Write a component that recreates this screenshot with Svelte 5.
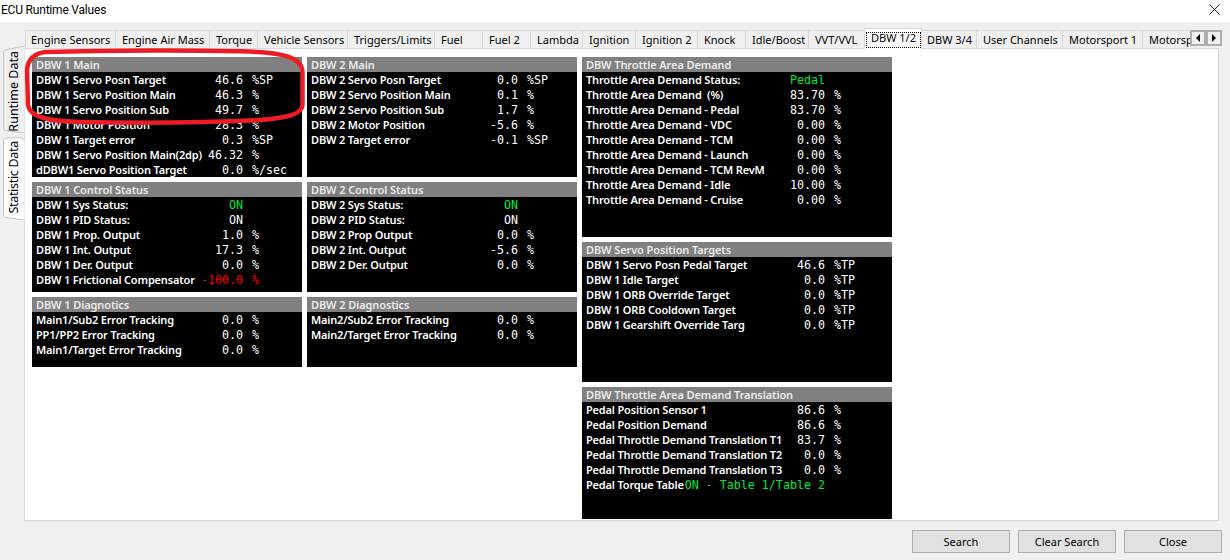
<script>
  const tabs = [
    ['Engine Sensors', 91], ['Engine Air Mass', 94], ['Torque', 48], ['Vehicle Sensors', 90],
    ['Triggers/Limits', 87], ['Fuel', 48], ['Fuel 2', 48], ['Lambda', 52], ['Ignition', 53],
    ['Ignition 2', 62], ['Knock', 48], ['Idle/Boost', 63], ['VVT/VVL', 57], ['DBW 1/2', 58, true],
    ['DBW 3/4', 56], ['User Channels', 86], ['Motorsport 1', 80], ['Motorsport 2', 80]
  ];

  // [label, value, unit, colour class]
  const col1 = [
    { title: 'DBW 1 Main', h: 120, rows: [
      ['DBW 1 Servo Posn Target', '46.6', '%SP'],
      ['DBW 1 Servo Position Main', '46.3', '%'],
      ['DBW 1 Servo Position Sub', '49.7', '%'],
      ['DBW 1 Motor Position', '28.3', '%'],
      ['DBW 1 Target error', '0.3', '%SP'],
      ['DBW 1 Servo Position Main(2dp)', '46.32', '%'],
      ['dDBW1 Servo Position Target', '0.0', '%/sec']
    ]},
    { title: 'DBW 1 Control Status', h: 110, rows: [
      ['DBW 1 Sys Status:', 'ON', '', 'green'],
      ['DBW 1 PID Status:', 'ON', ''],
      ['DBW 1 Prop. Output', '1.0', '%'],
      ['DBW 1 Int. Output', '17.3', '%'],
      ['DBW 1 Der. Output', '0.0', '%'],
      ['DBW 1 Frictional Compensator', '-100.0', '%', 'red']
    ]},
    { title: 'DBW 1 Diagnotics', h: 70, rows: [
      ['Main1/Sub2 Error Tracking', '0.0', '%'],
      ['PP1/PP2 Error Tracking', '0.0', '%'],
      ['Main1/Target Error Tracking', '0.0', '%']
    ]}
  ];

  const col2 = [
    { title: 'DBW 2 Main', h: 120, rows: [
      ['DBW 2 Servo Posn Target', '0.0', '%SP'],
      ['DBW 2 Servo Position Main', '0.1', '%'],
      ['DBW 2 Servo Position Sub', '1.7', '%'],
      ['DBW 2 Motor Position', '-5.6', '%'],
      ['DBW 2 Target error', '-0.1', '%SP']
    ]},
    { title: 'DBW 2 Control Status', h: 110, rows: [
      ['DBW 2 Sys Status:', 'ON', '', 'green'],
      ['DBW 2 PID Status:', 'ON', ''],
      ['DBW 2 Prop Output', '0.0', '%'],
      ['DBW 2 Int. Output', '-5.6', '%'],
      ['DBW 2 Der. Output', '0.0', '%']
    ]},
    { title: 'DBW 2 Diagnostics', h: 70, rows: [
      ['Main2/Sub2 Error Tracking', '0.0', '%'],
      ['Main2/Target Error Tracking', '0.0', '%']
    ]}
  ];

  const col3 = [
    { title: 'DBW Throttle Area Demand', h: 180, rows: [
      ['Throttle Area Demand Status:', 'Pedal', '', 'green'],
      ['Throttle Area Demand  (%)', '83.70', '%'],
      ['Throttle Area Demand - Pedal', '83.70', '%'],
      ['Throttle Area Demand - VDC', '0.00', '%'],
      ['Throttle Area Demand - TCM', '0.00', '%'],
      ['Throttle Area Demand - Launch', '0.00', '%'],
      ['Throttle Area Demand - TCM RevM', '0.00', '%'],
      ['Throttle Area Demand - Idle', '10.00', '%'],
      ['Throttle Area Demand - Cruise', '0.00', '%']
    ]},
    { title: 'DBW Servo Position Targets', h: 140, rows: [
      ['DBW 1 Servo Posn Pedal Target', '46.6', '%TP'],
      ['DBW 1 Idle Target', '0.0', '%TP'],
      ['DBW 1 ORB Override Target', '0.0', '%TP'],
      ['DBW 1 ORB Cooldown Target', '0.0', '%TP'],
      ['DBW 1 Gearshift Override Targ', '0.0', '%TP']
    ]},
    { title: 'DBW Throttle Area Demand Translation', h: 132, rows: [
      ['Pedal Position Sensor 1', '86.6', '%'],
      ['Pedal Position Demand', '86.6', '%'],
      ['Pedal Throttle Demand Translation T1', '83.7', '%'],
      ['Pedal Throttle Demand Translation T2', '0.0', '%'],
      ['Pedal Throttle Demand Translation T3', '0.0', '%'],
      ['Pedal Torque Table', 'ON - Table 1/Table 2', '', 'green']
    ]}
  ];

  const columns = [
    { panels: col1, cls: 'narrow' },
    { panels: col2, cls: 'narrow' },
    { panels: col3, cls: 'wide' }
  ];
</script>

<div class="window">
  <header class="titlebar">
    <span class="title">ECU Runtime Values</span>
    <svg class="close-x" width="11" height="11" viewBox="0 0 11 11">
      <path d="M0.5 0.5 L10.5 10.5 M10.5 0.5 L0.5 10.5" stroke="#222" stroke-width="1" fill="none" />
    </svg>
  </header>

  <div class="body">
    <div class="side-tabs">
      <div class="side-tab runtime">
        <svg width="22" height="88" viewBox="0 0 22 88">
          <path d="M21.5 0.5 L21.5 1 L2 5 Q0.5 5.5 0.5 7 L0.5 84 Q0.5 85 2 85.3 L21.5 88" fill="#f0f0f0" stroke="#c4c4c4" />
        </svg>
        <span>Runtime Data</span>
      </div>
      <div class="side-tab statistic">
        <svg width="22" height="83" viewBox="0 0 22 83">
          <path d="M21.5 3 Q19 0.5 16 0.5 L2 1.2 Q0.5 1.5 0.5 3 L0.5 79 Q0.5 80 2 80.3 L21.5 83" fill="#fff" stroke="#c4c4c4" />
        </svg>
        <span>Statistic Data</span>
      </div>
    </div>

    <div class="main">
      <div class="tabstrip">
        {#each tabs as t}
          <div class="tab" class:active={t[2]} style="width: {t[1]}px">
            <span class:focus={t[2]}>{t[0]}</span>
          </div>
        {/each}
        <div class="scrollers">
          <div class="scroller"><i class="arrow left"></i></div>
          <div class="scroller"><i class="arrow right"></i></div>
        </div>
      </div>

      <div class="pane">
        {#each columns as col}
          <div class="column {col.cls}">
            {#each col.panels as p}
              <section class="panel" style="height: {p.h}px">
                <h3>{p.title}</h3>
                {#each p.rows as r}
                  <div class="row">
                    <div class="pair">
                      <span class="label">{r[0]}</span>
                      <span class="value {r[3] || ''}">{r[1]}</span>
                    </div>
                    <span class="unit {r[3] || ''}">{r[2]}</span>
                  </div>
                {/each}
              </section>
            {/each}
          </div>
        {/each}

        <!-- hand-drawn marker round the first panel, viewBox is in page coordinates -->
        <svg class="oval" width="290" height="84" viewBox="24 48 290 84">
          <path d="M46 52 C110 50 200 50 250 51.5 C280 53 302 56 302.5 72 L302.5 105 C302 115 285 118 260 120 C200 123 130 123 80 122 C50 121 30 118 28 105 L27 70 C28 58 36 53 46 52 Z"
            fill="none" stroke="#ed1c24" stroke-width="4.5" />
        </svg>
      </div>
    </div>
  </div>

  <footer class="buttons">
    <button>Search</button>
    <button>Clear Search</button>
    <button>Close</button>
  </footer>
</div>

<style>
  :global(body) {
    margin: 0;
    background: #f0f0f0;
  }

  .window {
    width: 1230px;
    height: 560px;
    display: flex;
    flex-direction: column;
    overflow: hidden;
    font-family: "Noto Sans", sans-serif;
    font-size: 11px;
    color: #000;
    background: #f0f0f0;
  }

  .titlebar {
    height: 22px;
    flex: none;
    background: #fff;
    display: flex;
    justify-content: space-between;
    align-items: center;
    padding: 0 10px 3px 1px;
    box-sizing: border-box;
  }

  .title {
    font-family: Roboto, sans-serif;
    font-size: 12px;
    letter-spacing: -0.2px;
  }

  .body {
    flex: 1;
    display: flex;
    padding-left: 3px;
    min-height: 0;
  }

  .side-tabs {
    width: 22px;
    margin-right: -1px;
    flex: none;
    padding-top: 23px;
    display: flex;
    flex-direction: column;
    gap: 4px;
    position: relative;
    z-index: 1;
  }

  .side-tab {
    position: relative;
    display: flex;
    justify-content: center;
    align-items: flex-end;
    box-sizing: border-box;
  }

  .side-tab.runtime {
    height: 88px;
    padding-bottom: 1px;
  }

  .side-tab.statistic {
    height: 83px;
    padding-bottom: 6px;
  }

  .side-tab svg {
    position: absolute;
    left: 0;
    top: 0;
  }

  .side-tab span {
    position: relative;
    writing-mode: vertical-rl;
    transform: rotate(180deg);
    font-size: 12.5px;
    white-space: nowrap;
    line-height: 20px;
  }

  .side-tab.statistic span {
    letter-spacing: -0.3px;
  }

  .main {
    flex: 1;
    min-width: 0;
    display: flex;
    flex-direction: column;
    padding-top: 6px;
    padding-right: 11px;
  }

  .tabstrip {
    height: 21px;
    margin-bottom: -1px;
    flex: none;
    display: flex;
    align-items: flex-start;
    padding-left: 1px;
    position: relative;
    z-index: 1;
    overflow: hidden;
    width: 1197px;
  }

  .tab {
    flex: none;
    height: 18px;
    margin-top: 2px;
    box-sizing: border-box;
    border: 1px solid #d9d9d9;
    border-bottom: none;
    border-left: none;
    background: #f0f0f0;
    padding-left: 6px;
    line-height: 18px;
    white-space: nowrap;
    overflow: hidden;
  }

  .tab:first-child {
    border-left: 1px solid #d9d9d9;
    padding-left: 5px;
  }

  .tab.active {
    height: 21px;
    margin-top: 0;
    background: #fff;
    margin-left: -2px;
    margin-right: -1px;
    border-left: 1px solid #d9d9d9;
    padding-left: 1px;
    position: relative;
    z-index: 1;
  }

  .focus {
    display: block;
    box-sizing: border-box;
    width: 55px;
    height: 16px;
    margin-top: 3px;
    border: 1px dotted #000;
    padding-left: 4px;
    line-height: 10px;
  }

  .scrollers {
    position: absolute;
    right: 0;
    top: 2px;
    display: flex;
    z-index: 2;
  }

  .scroller {
    width: 16px;
    height: 16px;
    box-sizing: border-box;
    background: #f0f0f0;
    border: 2px solid #adadad;
    display: flex;
    align-items: center;
    justify-content: center;
  }

  .arrow {
    width: 0;
    height: 0;
    border-top: 4px solid transparent;
    border-bottom: 4px solid transparent;
  }

  .arrow.left {
    border-right: 4px solid #000;
  }

  .arrow.right {
    border-left: 4px solid #000;
  }

  .pane {
    position: relative;
    background: #fff;
    border: 1px solid #d9d9d9;
    display: flex;
    gap: 5px;
    padding: 8px 0 0 7px;
    box-sizing: border-box;
    height: 473px;
    flex: none;
  }

  .column {
    display: flex;
    flex-direction: column;
    gap: 5px;
  }

  .column.narrow {
    width: 270px;
    --pair: 211px;
  }

  .column.wide {
    width: 310px;
    --pair: 243px;
  }

  .panel {
    background: #000;
    color: #fff;
    overflow: hidden;
    font-weight: 600;
  }

  h3 {
    margin: 0;
    height: 15px;
    line-height: 15px;
    font-size: 11px;
    font-weight: 600;
    letter-spacing: -0.1px;
    background: #808080;
    color: #ececec;
    padding-left: 4px;
  }

  .row {
    display: flex;
    align-items: baseline;
    height: 15px;
    line-height: 15px;
    white-space: pre;
  }

  .pair {
    width: var(--pair);
    display: flex;
    align-items: baseline;
    justify-content: space-between;
    padding-left: 4px;
    box-sizing: border-box;
    flex: none;
  }

  .label {
    letter-spacing: -0.17px;
  }

  .value,
  .unit {
    font-family: "DejaVu Sans Mono", monospace;
    font-size: 11.67px;
    font-weight: 400;
  }

  .unit {
    margin-left: 9px;
  }

  .green {
    color: #00e83c;
  }

  .red {
    color: #f00;
  }

  .oval {
    position: absolute;
    left: -1px;
    top: -1px;
  }

  .buttons {
    height: 39px;
    flex: none;
    display: flex;
    justify-content: flex-end;
    gap: 8px;
    padding: 9px 8px 0 0;
    box-sizing: border-box;
  }

  button {
    width: 98px;
    height: 23px;
    box-sizing: border-box;
    border: 1px solid #adadad;
    background: #e1e1e1;
    font-family: inherit;
    font-size: 11px;
    color: #000;
    padding: 0;
  }
</style>
